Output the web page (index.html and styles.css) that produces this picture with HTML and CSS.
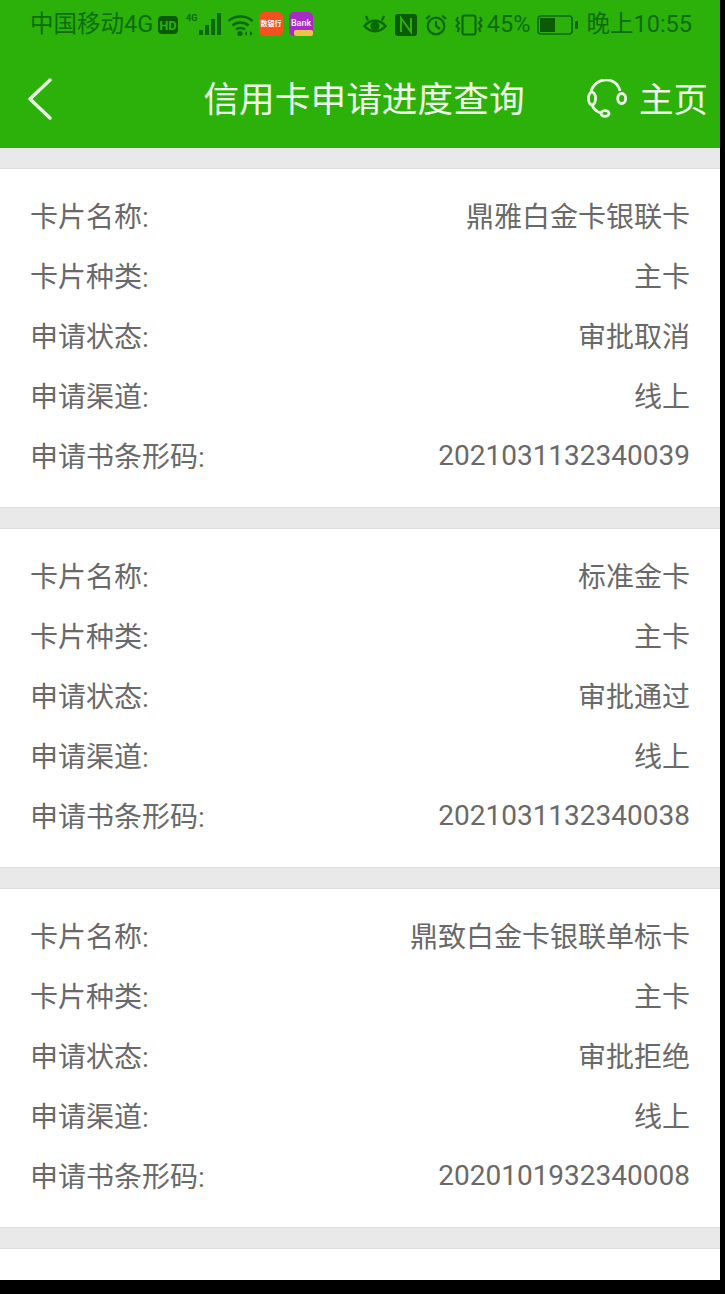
FILE: index.html
```html
<!DOCTYPE html>
<html lang="zh-CN">
<head>
<meta charset="utf-8">
<title>信用卡申请进度查询</title>
<link rel="stylesheet" href="styles.css">
</head>
<body>
<div class="screen">
  <header class="top">
    <div class="status">
      <div class="status-group">
        <span class="carrier">中国移动4G</span>
        <svg class="ic hd" viewBox="0 0 20 20"><rect x="0" y="1" width="20" height="18" rx="4" fill="#0b5a06"/><text x="10" y="15" text-anchor="middle" class="hd-text">HD</text></svg>
        <svg class="ic signal" viewBox="0 0 36 24"><text x="0" y="8" class="sig-text">4G</text><rect x="13" y="17" width="4" height="5"/><rect x="19" y="12" width="4" height="10"/><rect x="25" y="6" width="4" height="16"/><rect x="31" y="0" width="4" height="22"/></svg>
        <svg class="ic wifi" viewBox="0 0 27 24"><path d="M1.5 8 C8 2 19 2 25.5 8 M5.5 12.5 C10 8.5 17 8.5 21.5 12.5 M9 16.5 C11.5 14.5 15.5 14.5 18 16.5" fill="none" stroke="#0b6a08" stroke-width="2.6"/><circle cx="13" cy="20.5" r="2.6" fill="#0b6a08"/><path d="M20 18 l-2.5 2.5 l2.5 2.5z M23 18 l2.5 2.5 l-2.5 2.5z" fill="#0b6a08"/></svg>
        <svg class="ic app" viewBox="0 0 24 24"><rect width="24" height="24" rx="5" fill="#f4511e"/><text x="12" y="13.5" text-anchor="middle" class="app-red">数银行</text></svg>
        <svg class="ic app" viewBox="0 0 24 24"><rect width="24" height="24" rx="5" fill="#a72bc4"/><rect x="5" y="18" width="19" height="6" rx="2" fill="#eec14a"/><text x="12" y="14" text-anchor="middle" class="app-bank">Bank</text></svg>
      </div>
      <div class="status-group right">
        <svg class="ic eye" viewBox="0 0 24 20"><path d="M1.5 12 C7 5 17 5 22.5 12 C17 19 7 19 1.5 12Z" fill="none" stroke="#0b6a08" stroke-width="2.4"/><circle cx="12" cy="12" r="4.5" fill="#0b6a08"/><path d="M5 6.5 L3 2 M19 6.5 L21 2" stroke="#0b6a08" stroke-width="2.2"/></svg>
        <svg class="ic nfc" viewBox="0 0 22 24"><rect y="1" width="22" height="22" rx="3" fill="#0b5a06"/><path d="M6 19 V5 L16 19 V5" fill="none" stroke="#2cb00a" stroke-width="2"/></svg>
        <svg class="ic alarm" viewBox="0 0 22 22"><circle cx="11" cy="12" r="8.3" fill="none" stroke="#0b6a08" stroke-width="2.2"/><path d="M11 7 V12 L15 15 M1 5 L5 1.5 M21 5 L17 1.5" fill="none" stroke="#0b6a08" stroke-width="2.2"/></svg>
        <svg class="ic vib" viewBox="0 0 28 22"><rect x="7.5" y="1.5" width="13" height="19" rx="2" fill="none" stroke="#0b6a08" stroke-width="2.2"/><path d="M3 3 L1.5 6 L4 9 L1.5 12 L4 15 L2.5 18 M25 3 L26.5 6 L24 9 L26.5 12 L24 15 L25.5 18" fill="none" stroke="#0b6a08" stroke-width="2"/></svg>
        <span class="pct">45%</span>
        <svg class="ic batt" viewBox="0 0 41 20"><rect x="1" y="1" width="34" height="18" rx="3" fill="none" stroke="#0b6a08" stroke-width="1.6"/><rect x="3" y="3" width="15" height="14" fill="#0b5a06"/><rect x="38" y="6" width="3" height="8" rx="1" fill="#0b6a08"/></svg>
        <span class="clock">晚上10:55</span>
      </div>
    </div>
    <nav class="nav">
      <div class="nav-left">
        <svg class="back" viewBox="0 0 26 42"><path d="M23 2 L3 21 L23 40" fill="none" stroke="#eafbe6" stroke-width="3.4" stroke-linecap="round" stroke-linejoin="round"/></svg>
      </div>
      <h1 class="title">信用卡申请进度查询</h1>
      <div class="nav-right">
        <svg class="headset" viewBox="0 0 40 40"><path d="M4 13 C8 -3 30 -3 33 12 M5 26 C7 31 10 33 14 34" fill="none" stroke="#eafbe6" stroke-width="2.8"/><ellipse cx="5" cy="19.5" rx="3.6" ry="6.3" fill="none" stroke="#eafbe6" stroke-width="2.8"/><ellipse cx="34.7" cy="19.5" rx="4" ry="5" fill="none" stroke="#eafbe6" stroke-width="2.8"/><ellipse cx="18" cy="34.5" rx="4" ry="2.8" fill="none" stroke="#eafbe6" stroke-width="2.8"/></svg>
        <span class="home">主页</span>
      </div>
    </nav>
  </header>
  <main class="list">
    <section class="card">
      <div class="row"><span>卡片名称:</span><span>鼎雅白金卡银联卡</span></div>
      <div class="row"><span>卡片种类:</span><span>主卡</span></div>
      <div class="row"><span>申请状态:</span><span>审批取消</span></div>
      <div class="row"><span>申请渠道:</span><span>线上</span></div>
      <div class="row"><span>申请书条形码:</span><span>2021031132340039</span></div>
    </section>
    <section class="card">
      <div class="row"><span>卡片名称:</span><span>标准金卡</span></div>
      <div class="row"><span>卡片种类:</span><span>主卡</span></div>
      <div class="row"><span>申请状态:</span><span>审批通过</span></div>
      <div class="row"><span>申请渠道:</span><span>线上</span></div>
      <div class="row"><span>申请书条形码:</span><span>2021031132340038</span></div>
    </section>
    <section class="card">
      <div class="row"><span>卡片名称:</span><span>鼎致白金卡银联单标卡</span></div>
      <div class="row"><span>卡片种类:</span><span>主卡</span></div>
      <div class="row"><span>申请状态:</span><span>审批拒绝</span></div>
      <div class="row"><span>申请渠道:</span><span>线上</span></div>
      <div class="row"><span>申请书条形码:</span><span>2020101932340008</span></div>
    </section>
    <section class="card"></section>
  </main>
</div>
</body>
</html>
```

FILE: styles.css
```css
html, body {
  margin: 0;
  padding: 0;
  height: 100%;
  background: #000;
  overflow: hidden;
}
body {
  font-family: Roboto, "Noto Sans CJK SC", sans-serif;
}
.screen {
  width: 720px;
  height: 1280px;
  background: #e8e9e8;
  overflow: hidden;
}
.top {
  background: #2cb00a;
  height: 148px;
}
.status {
  height: 50px;
  display: flex;
  justify-content: space-between;
  align-items: center;
  padding: 0 28px 0 30px;
  color: #0d6e0a;
  font-size: 23.5px;
}
.status-group {
  display: flex;
  align-items: center;
}
.carrier { margin-right: 5px; line-height: 1; }
.ic { display: block; flex: none; fill: #0b6a08; }
.hd { width: 20px; height: 20px; margin-right: 8px; }
.hd-text { font: 700 13px Roboto, sans-serif; fill: #2cb00a; }
.signal { width: 36px; height: 24px; margin-right: 5px; }
.sig-text { font: 700 9px Roboto, sans-serif; fill: #0b6a08; }
.wifi { width: 27px; height: 24px; margin-right: 5px; }
.app { width: 24px; height: 24px; margin: 0 6px 2px 0; }
.app:last-child { margin-right: 0; }
.app-red { font: 700 7px "Noto Sans CJK SC", sans-serif; fill: #fff; }
.app-bank { font: 500 9px Roboto, sans-serif; fill: #fff; }
.eye { width: 24px; height: 20px; margin: 0 8px 2px 0; }
.nfc { width: 22px; height: 24px; margin-right: 8px; }
.alarm { width: 22px; height: 22px; margin-right: 8px; }
.vib { width: 28px; height: 22px; margin-right: 4px; }
.pct { margin-right: 7px; line-height: 1; }
.batt { width: 41px; height: 20px; margin-right: 8px; }
.clock { line-height: 1; }
.nav {
  height: 98px;
  display: grid;
  grid-template-columns: 1fr auto 1fr;
  align-items: center;
  padding: 0 12px 0 20px;
  color: #eefbe9;
}
.nav-left { display: flex; padding-left: 7px; }
.back { width: 26px; height: 42px; display: block; }
.title {
  margin: 0;
  font-size: 35.7px;
  font-weight: 400;
  line-height: 1;
  padding-top: 4px;
}
.nav-right {
  display: flex;
  align-items: center;
  justify-content: flex-end;
  gap: 12px;
}
.headset { width: 40px; height: 40px; display: block; }
.home { font-size: 34.5px; line-height: 1; padding-top: 2px; }
.list {
  display: flex;
  flex-direction: column;
  gap: 20px;
  padding-top: 20px;
}
.card {
  background: #fff;
  border-top: 1px solid #dedfde;
  border-bottom: 1px solid #dedfde;
  padding: 16px 30px 22px 30px;
  flex: none;
  height: 300px;
}
.row {
  height: 60px;
  display: flex;
  justify-content: space-between;
  align-items: center;
  font-size: 28px;
  color: #696969;
}
```
